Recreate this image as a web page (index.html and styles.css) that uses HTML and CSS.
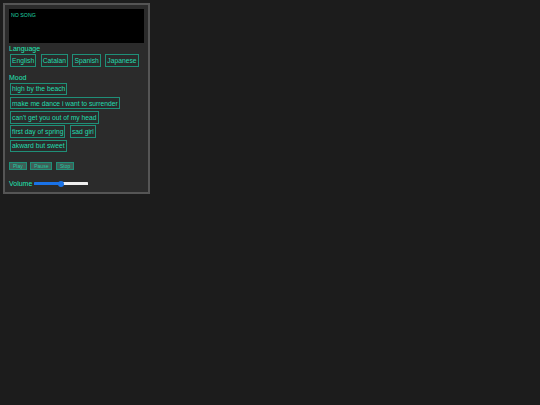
FILE: index.html
```html
<!DOCTYPE html>
<html lang="en">
<head>
    <meta charset="UTF-8">
    <title>player</title>
    <link rel="stylesheet" href="styles.css">
</head>
<body>
    <div class="player">
        <div class="screen">NO SONG</div>
        <p class="label">Language</p>
        <div class="options">
            <button class="option">English</button>
            <button class="option">Catalan</button>
            <button class="option">Spanish</button>
            <button class="option">Japanese</button>
        </div>
        <p class="label mood_label">Mood</p>
        <div class="options moods">
            <button class="option">high by the beach</button>
            <button class="option">make me dance i want to surrender</button>
            <button class="option">can't get you out of my head</button>
            <button class="option">first day of spring</button>
            <button class="option">sad girl</button>
            <button class="option">akward but sweet</button>
        </div>
        <div class="controls">
            <button class="control">Play</button>
            <button class="control">Pause</button>
            <button class="control">Stop</button>
        </div>
        <div class="volume">
            <label class="label" for="vol">Volume</label>
            <input id="vol" type="range" min="0" max="100" value="50">
        </div>
    </div>
</body>
</html>
```

FILE: styles.css
```css
* {
    box-sizing: border-box;
    padding: 0;
    margin: 0;
}
body {
    background-color: #1c1c1c;
    font-family: "Liberation Sans", Arial, sans-serif;
    padding: 3px;
}
.player {
    width: 147px;
    height: 191px;
    background-color: #2b2b2b;
    border: 2px solid #555;
    padding: 4px;
}
.screen {
    height: 34px;
    background-color: #000;
    color: #1fd8a8;
    font-size: 5.25px;
    padding: 3px 2px;
}
.label {
    color: #22e6b4;
    font-size: 7px;
    line-height: 8px;
}
.screen + .label {
    margin-top: 2px;
}
.mood_label {
    margin-top: 7px;
}
.options {
    display: flex;
    flex-wrap: wrap;
    gap: 1.75px 4.5px;
    padding: 1px 0 0 1px;
}
.option {
    height: 12.5px;
    padding: 0 1px;
    background-color: #2b2b2b;
    border: 1px solid #1f8f78;
    color: #22dcae;
    font-family: inherit;
    font-size: 6.75px;
}
.controls {
    display: flex;
    gap: 3.5px;
    margin-top: 10px;
}
.control {
    height: 8px;
    padding: 0 3px;
    background-color: #3f5f58;
    border: 1px solid #1f8f78;
    color: #1fc8a0;
    font-family: inherit;
    font-size: 5px;
    line-height: 6px;
}
.volume {
    display: flex;
    align-items: center;
    gap: 1.5px;
    margin-top: 10px;
}
.volume input {
    appearance: none;
    width: 54px;
    height: 6px;
    margin-bottom: 1px;
    background: linear-gradient(to right, #1a73e8 50%, #efefef 50%) center / 100% 3px no-repeat;
    border-radius: 2px;
}
.volume input::-webkit-slider-thumb {
    appearance: none;
    width: 6px;
    height: 6px;
    border-radius: 50%;
    background-color: #1a73e8;
}
```
